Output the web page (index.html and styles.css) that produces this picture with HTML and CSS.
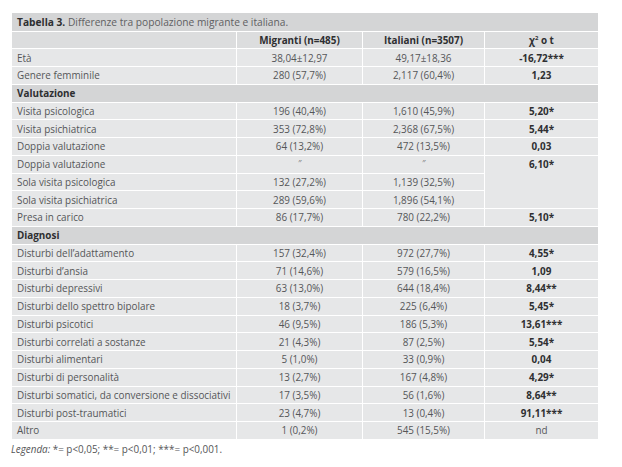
FILE: index.html
```html
<!DOCTYPE html>
<html lang="it">
<head>
<meta charset="utf-8">
<link rel="stylesheet" href="styles.css">
</head>
<body>
<div class="wrap">
<table class="tbl">
  <colgroup>
    <col class="c1"><col class="c2"><col class="c3"><col class="c4">
  </colgroup>
  <tr class="title"><td colspan="4"><b>Tabella 3.</b> Differenze tra popolazione migrante e italiana.</td></tr>
  <tr class="head"><td></td><td>Migranti (n=485)</td><td>Italiani (n=3507)</td><td>χ<sup>2</sup> o t</td></tr>
  <tr><td>Età</td><td>38,04±12,97</td><td>49,17±18,36</td><td class="v">-16,72***</td></tr>
  <tr><td>Genere femminile</td><td>280 (57,7%)</td><td>2,117 (60,4%)</td><td class="v">1,23</td></tr>
  <tr class="sec"><td colspan="4">Valutazione</td></tr>
  <tr><td>Visita psicologica</td><td>196 (40,4%)</td><td>1,610 (45,9%)</td><td class="v">5,20*</td></tr>
  <tr><td>Visita psichiatrica</td><td>353 (72,8%)</td><td>2,368 (67,5%)</td><td class="v">5,44*</td></tr>
  <tr><td>Doppia valutazione</td><td>64 (13,2%)</td><td>472 (13,5%)</td><td class="v">0,03</td></tr>
  <tr><td>Doppia valutazione</td><td class="q">″</td><td class="q">″</td><td class="v top" rowspan="3">6,10*</td></tr>
  <tr><td>Sola visita psicologica</td><td>132 (27,2%)</td><td>1,139 (32,5%)</td></tr>
  <tr><td>Sola visita psichiatrica</td><td>289 (59,6%)</td><td>1,896 (54,1%)</td></tr>
  <tr><td>Presa in carico</td><td>86 (17,7%)</td><td>780 (22,2%)</td><td class="v">5,10*</td></tr>
  <tr class="sec"><td colspan="4">Diagnosi</td></tr>
  <tr><td>Disturbi dell’adattamento</td><td>157 (32,4%)</td><td>972 (27,7%)</td><td class="v">4,55*</td></tr>
  <tr><td>Disturbi d’ansia</td><td>71 (14,6%)</td><td>579 (16,5%)</td><td class="v">1,09</td></tr>
  <tr><td>Disturbi depressivi</td><td>63 (13,0%)</td><td>644 (18,4%)</td><td class="v">8,44**</td></tr>
  <tr><td>Disturbi dello spettro bipolare</td><td>18 (3,7%)</td><td>225 (6,4%)</td><td class="v">5,45*</td></tr>
  <tr><td>Disturbi psicotici</td><td>46 (9,5%)</td><td>186 (5,3%)</td><td class="v">13,61***</td></tr>
  <tr><td>Disturbi correlati a sostanze</td><td>21 (4,3%)</td><td>87 (2,5%)</td><td class="v">5,54*</td></tr>
  <tr><td>Disturbi alimentari</td><td>5 (1,0%)</td><td>33 (0,9%)</td><td class="v">0,04</td></tr>
  <tr><td>Disturbi di personalità</td><td>13 (2,7%)</td><td>167 (4,8%)</td><td class="v">4,29*</td></tr>
  <tr><td>Disturbi somatici, da conversione e dissociativi</td><td>17 (3,5%)</td><td>56 (1,6%)</td><td class="v">8,64**</td></tr>
  <tr><td>Disturbi post-traumatici</td><td>23 (4,7%)</td><td>13 (0,4%)</td><td class="v">91,11***</td></tr>
  <tr><td>Altro</td><td>1 (0,2%)</td><td>545 (15,5%)</td><td>nd</td></tr>
</table>
<p class="legend"><i>Legenda:</i> *= p&lt;0,05; **= p&lt;0,01; ***= p&lt;0,001.</p>
</div>
</body>
</html>
```
FILE: styles.css
```css
html, body {
  margin: 0;
  padding: 0;
  background: #ffffff;
}
body {
  font-family: "Open Sans", "Noto Sans", sans-serif;
  font-size: 9.9px;
  color: #555658;
}
.wrap {
  padding: 12px 0 0 11px;
  width: 587px;
}
.tbl {
  border-collapse: collapse;
  table-layout: fixed;
  width: 587px;
}
.c1 { width: 225px; }
.c2 { width: 126px; }
.c3 { width: 122px; }
.c4 { width: 114px; }
.tbl td {
  border: 1px solid #ffffff;
  background: #e6e7e8;
  height: 16.75px;
  padding: 0;
  text-align: center;
  vertical-align: middle;
  line-height: 12px;
  white-space: nowrap;
}
.tbl td:first-child {
  text-align: left;
  padding-left: 5px;
}
.tbl tr.title td {
  background: #d4d5d6;
  height: 17.5px;
  color: #5f6062;
  font-size: 10.2px;
}
.tbl tr.title b {
  color: #2e2f31;
}
.tbl tr.head td {
  background: #dcddde;
  font-weight: 700;
  color: #2e2f31;
}
.tbl tr.sec td {
  background: #d4d5d6;
  font-weight: 700;
  color: #2e2f31;
}
.tbl td.v {
  font-weight: 700;
  color: #2e2f31;
}
.tbl td.top {
  vertical-align: top;
  padding-top: 2px;
}
.tbl td.q {
  font-size: 9px;
  font-style: italic;
  color: #7a7b7d;
}
sup {
  font-size: 6px;
  line-height: 0;
  vertical-align: 4px;
}
.legend {
  margin: 2px 0 0 0;
  font-size: 9.9px;
  line-height: 14px;
  color: #555658;
}
```
